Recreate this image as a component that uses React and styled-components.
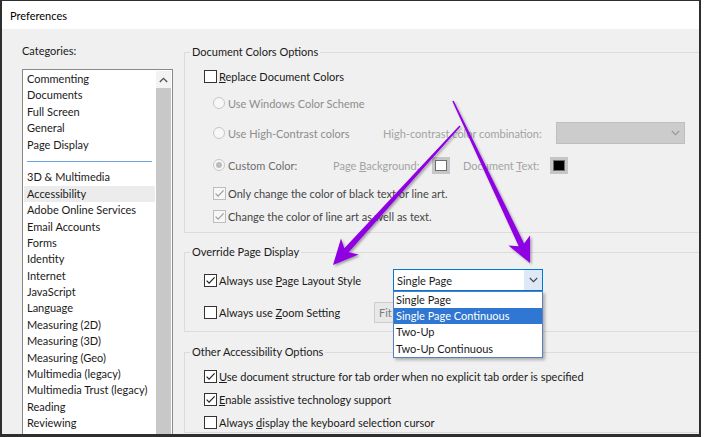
import React from "react";
import styled, { createGlobalStyle } from "styled-components";

const Global = createGlobalStyle`
  html, body { margin: 0; padding: 0; background: #fff; }
  body { font-family: Lato, "Open Sans", sans-serif; font-size: 11px; color: #1a1a1a; }
  * { box-sizing: border-box; }
`;

const tones = {
  normal: "#1a1a1a",
  sub: "#454545",
  muted: "#6d6d6d",
  disabled: "#8d8d8d",
  faint: "#a3a3a3",
};

const Root = styled.div`
  position: relative;
  width: 705px;
  height: 437px;
  overflow: hidden;
  background: #fff;
`;

const Frame = styled.div`
  width: 701px;
  height: 437px;
  border-style: solid;
  border-color: #2e2e2e;
  border-width: 1px 2px 3px 2px;
  display: flex;
  flex-direction: column;
  background: #f0f0f0;
  overflow: hidden;
`;

const TitleBar = styled.div`
  height: 28px;
  flex: none;
  background: #fff;
  display: flex;
  align-items: center;
  padding-left: 8px;
  color: #000;
`;

const Body = styled.div`
  flex: 1;
  min-height: 0;
  display: grid;
  grid-template-columns: 151px 1fr;
  column-gap: 11px;
  padding: 15px 0 0 20px;
  overflow: hidden;
`;

const LeftCol = styled.div`
  display: flex;
  flex-direction: column;
  min-height: 0;
`;

const Caption = styled.div`
  height: 16px;
  line-height: 16px;
  margin-top: -1px;
`;

const ListBox = styled.div`
  margin-top: 10px;
  flex: 1;
  min-height: 0;
  background: #fff;
  border: 1px solid #8a8a8a;
  border-bottom: none;
  padding: 1px 1px 0 1px;
  display: flex;
`;

const Items = styled.div`
  flex: 1;
  display: flex;
  flex-direction: column;
  min-width: 0;
`;

const Item = styled.div`
  flex: none;
  height: 16.4px;
  line-height: 16.4px;
  padding-left: 3px;
  margin-right: 1px;
  white-space: nowrap;
  background: ${(p) => (p.$selected ? "#ececec" : "transparent")};
`;

const Separator = styled.div`
  flex: none;
  height: 16.4px;
  display: flex;
  align-items: center;
  padding: 0 4px 0 3px;
  &::after {
    content: "";
    flex: 1;
    height: 1px;
    background: #6aa5e2;
  }
`;

const ScrollBar = styled.div`
  width: 15px;
  flex: none;
  display: flex;
  flex-direction: column;
`;

const ScrollBtn = styled.div`
  height: 17px;
  flex: none;
  background: #f3f3f3;
  display: flex;
  align-items: center;
  justify-content: center;
  color: #505050;
`;

const Thumb = styled.div`
  flex: 1;
  background: #c8c8c8;
`;

const RightCol = styled.div`
  display: flex;
  flex-direction: column;
  align-items: flex-start;
  min-width: 0;
  overflow: hidden;
`;

const Group = styled.fieldset`
  width: calc(100% + 12px);
  flex: none;
  margin: ${(p) => p.$mt || 0}px 0 0 0;
  padding: 0 0 ${(p) => p.$pb || 0}px 0;
  border: 1px solid #dcdcdc;
  min-width: 0;
`;

const Legend = styled.legend`
  margin-left: 5px;
  padding: 0 2px;
  line-height: 16px;
  color: #1a1a1a;
`;

const Row = styled.div`
  display: flex;
  align-items: center;
  height: ${(p) => p.$h || 20}px;
  margin-top: ${(p) => p.$mt || 0}px;
  padding-left: ${(p) => p.$indent || 19}px;
  white-space: nowrap;
`;

const Option = styled.label`
  display: flex;
  align-items: center;
  flex: none;
  ${(p) => (p.$w ? `width: ${p.$w}px;` : "")}
`;

const Text = styled.span`
  color: ${(p) => tones[p.$tone || "normal"]};
  flex: none;
  ${(p) => (p.$w ? `width: ${p.$w}px;` : "")}
  ${(p) => (p.$ml ? `margin-left: ${p.$ml}px;` : "")}
`;

const Key = styled.u`
  text-decoration: underline;
  text-underline-offset: 1px;
`;

const Box = styled.span`
  width: 13px;
  height: 13px;
  flex: none;
  margin-right: 2px;
  border: 1px solid ${(p) => (p.$disabled ? "#bdbdbd" : "#333")};
  background: ${(p) => (p.$disabled ? "#f7f7f7" : "#fff")};
  color: ${(p) => (p.$disabled ? "#9c9c9c" : "#222")};
  display: flex;
  align-items: center;
  justify-content: center;
`;

const RadioCircle = styled.span`
  width: 12px;
  height: 12px;
  flex: none;
  margin-right: 3px;
  border-radius: 50%;
  border: 1px solid #c6c6c6;
  background: #f7f7f7;
  display: flex;
  align-items: center;
  justify-content: center;
  &::after {
    content: "";
    width: 6px;
    height: 6px;
    border-radius: 50%;
    background: ${(p) => (p.$on ? "#bcbcbc" : "transparent")};
  }
`;

const DisabledCombo = styled.div`
  width: 129px;
  height: 22px;
  flex: none;
  background: #cccccc;
  border: 1px solid #bfbfbf;
  display: flex;
  align-items: center;
  justify-content: flex-end;
  padding-right: 4px;
  color: #9a9a9a;
`;

const Swatch = styled.span`
  width: 18px;
  height: 17px;
  flex: none;
  padding: 3px;
  background: #c6c6c6;
  display: flex;
  &::after {
    content: "";
    flex: 1;
    background: ${(p) => p.$color};
    border: 1px solid #6d6d6d;
  }
`;

const Select = styled.div`
  position: relative;
  width: 150px;
  height: 22px;
  flex: none;
  background: #fff;
  border: 1px solid #0078d7;
  display: flex;
  align-items: center;
`;

const SelectText = styled.span`
  flex: 1;
  padding-left: 3px;
`;

const SelectBtn = styled.span`
  width: 18px;
  align-self: stretch;
  background: #dde9f6;
  display: flex;
  align-items: center;
  justify-content: center;
  color: #444;
`;

const Popup = styled.div`
  position: absolute;
  left: -1px;
  top: calc(100% + 1px);
  width: 150px;
  background: #fff;
  border: 1px solid #5a7ec2;
  box-shadow: 2px 2px 3px rgba(0, 0, 0, 0.28);
  z-index: 3;
`;

const PopupItem = styled.div`
  height: 16.2px;
  line-height: 16.2px;
  padding-left: 2px;
  white-space: nowrap;
  background: ${(p) => (p.$active ? "#2f77d2" : "transparent")};
  color: ${(p) => (p.$active ? "#fff" : "#1a1a1a")};
`;

const FitBox = styled.div`
  width: 150px;
  height: 21px;
  flex: none;
  background: #e8e8e8;
  border: 1px solid #cdcdcd;
  display: flex;
  align-items: center;
  padding-left: 4px;
  color: #7d7d7d;
`;

const Overlay = styled.svg`
  position: absolute;
  left: 0;
  top: 0;
  width: 705px;
  height: 437px;
  pointer-events: none;
  z-index: 10;
`;

const Check = () => (
  <svg width="11" height="11" viewBox="0 0 11 11">
    <polyline points="1.6,5.6 4.1,8.1 9.6,2.4" fill="none" stroke="currentColor" strokeWidth="1.2" />
  </svg>
);

const CheckBox = ({ checked, disabled }) => (
  <Box $disabled={disabled}>{checked && <Check />}</Box>
);

const ChevronDown = ({ color = "currentColor" }) => (
  <svg width="9" height="6" viewBox="0 0 9 6">
    <polyline points="0.8,1 4.5,4.7 8.2,1" fill="none" stroke={color} strokeWidth="1.1" />
  </svg>
);

const ChevronUp = () => (
  <svg width="9" height="6" viewBox="0 0 9 6">
    <polyline points="0.8,5 4.5,1.3 8.2,5" fill="none" stroke="currentColor" strokeWidth="1.3" />
  </svg>
);

function arrowPoints(sx, sy, tx, ty) {
  const w0 = 1.6, w1 = 6, headLen = 25, headHalf = 12, notch = 5;
  const len = Math.hypot(tx - sx, ty - sy);
  const dx = (tx - sx) / len, dy = (ty - sy) / len;
  const nx = -dy, ny = dx;
  const bx = tx - dx * headLen, by = ty - dy * headLen;
  const kx = tx - dx * (headLen - notch), ky = ty - dy * (headLen - notch);
  const pts = [
    [sx + nx * w0 / 2, sy + ny * w0 / 2],
    [kx + nx * w1 / 2, ky + ny * w1 / 2],
    [bx + nx * headHalf, by + ny * headHalf],
    [tx, ty],
    [bx - nx * headHalf, by - ny * headHalf],
    [kx - nx * w1 / 2, ky - ny * w1 / 2],
    [sx - nx * w0 / 2, sy - ny * w0 / 2],
  ];
  return pts.map((p) => p.map((v) => v.toFixed(1)).join(",")).join(" ");
}

const categoriesTop = ["Commenting", "Documents", "Full Screen", "General", "Page Display"];
const categoriesBottom = [
  "3D & Multimedia",
  "Accessibility",
  "Adobe Online Services",
  "Email Accounts",
  "Forms",
  "Identity",
  "Internet",
  "JavaScript",
  "Language",
  "Measuring (2D)",
  "Measuring (3D)",
  "Measuring (Geo)",
  "Multimedia (legacy)",
  "Multimedia Trust (legacy)",
  "Reading",
  "Reviewing",
];

const layoutOptions = ["Single Page", "Single Page Continuous", "Two-Up", "Two-Up Continuous"];

export default function App() {
  return (
    <Root>
      <Global />
      <Frame>
        <TitleBar>Preferences</TitleBar>
        <Body>
          <LeftCol>
            <Caption>Categories:</Caption>
            <ListBox>
              <Items>
                {categoriesTop.map((c) => (
                  <Item key={c}>{c}</Item>
                ))}
                <Separator />
                {categoriesBottom.map((c) => (
                  <Item key={c} $selected={c === "Accessibility"}>
                    {c}
                  </Item>
                ))}
              </Items>
              <ScrollBar>
                <ScrollBtn>
                  <ChevronUp />
                </ScrollBtn>
                <Thumb />
              </ScrollBar>
            </ListBox>
          </LeftCol>

          <RightCol>
            <Group $pb={6}>
              <Legend>Document Colors Options</Legend>
              <Row $mt={6}>
                <Option>
                  <CheckBox />
                  <Text>
                    <Key>R</Key>eplace Document Colors
                  </Text>
                </Option>
              </Row>
              <Row $mt={7} $indent={28}>
                <Option>
                  <RadioCircle />
                  <Text $tone="disabled">Use Windows Color Scheme</Text>
                </Option>
              </Row>
              <Row $mt={9} $h={22} $indent={28}>
                <Option $w={170}>
                  <RadioCircle />
                  <Text $tone="disabled">Use High-Contrast colors</Text>
                </Option>
                <Text $tone="faint" $w={173}>
                  Hi<Key>g</Key>h-contrast color combination:
                </Text>
                <DisabledCombo>
                  <ChevronDown color="#9a9a9a" />
                </DisabledCombo>
              </Row>
              <Row $mt={11} $indent={28}>
                <Option $w={120}>
                  <RadioCircle $on />
                  <Text $tone="muted">Custom Color:</Text>
                </Option>
                <Text $tone="faint" $w={99}>
                  Page <Key>B</Key>ackground:
                </Text>
                <Swatch $color="#ffffff" />
                <Text $tone="faint" $w={87} $ml={13}>
                  Document <Key>T</Key>ext:
                </Text>
                <Swatch $color="#000000" />
              </Row>
              <Row $mt={8} $indent={28}>
                <Option>
                  <CheckBox checked disabled />
                  <Text $tone="sub">Only change the color of black text or line art.</Text>
                </Option>
              </Row>
              <Row $mt={3} $indent={28}>
                <Option>
                  <CheckBox checked disabled />
                  <Text $tone="sub">Change the color of line art as well as text.</Text>
                </Option>
              </Row>
            </Group>

            <Group $mt={11} $pb={8}>
              <Legend>Override Page Display</Legend>
              <Row $mt={9} $h={22}>
                <Option $w={189}>
                  <CheckBox checked />
                  <Text>
                    Always use <Key>P</Key>age Layout Style
                  </Text>
                </Option>
                <Select>
                  <SelectText>Single Page</SelectText>
                  <SelectBtn>
                    <ChevronDown />
                  </SelectBtn>
                  <Popup>
                    {layoutOptions.map((o) => (
                      <PopupItem key={o} $active={o === "Single Page Continuous"}>
                        {o}
                      </PopupItem>
                    ))}
                  </Popup>
                </Select>
              </Row>
              <Row $mt={11} $h={21}>
                <Option $w={170}>
                  <CheckBox />
                  <Text>
                    Always use <Key>Z</Key>oom Setting
                  </Text>
                </Option>
                <FitBox>Fit</FitBox>
              </Row>
            </Group>

            <Group $mt={12}>
              <Legend>Other Accessibility Options</Legend>
              <Row $mt={6}>
                <Option>
                  <CheckBox checked />
                  <Text>
                    <Key>U</Key>se document structure for tab order when no explicit tab order is specified
                  </Text>
                </Option>
              </Row>
              <Row $mt={3}>
                <Option>
                  <CheckBox checked />
                  <Text>
                    <Key>E</Key>nable assistive technology support
                  </Text>
                </Option>
              </Row>
              <Row $mt={3}>
                <Option>
                  <CheckBox />
                  <Text>
                    Always <Key>d</Key>isplay the keyboard selection cursor
                  </Text>
                </Option>
              </Row>
            </Group>
          </RightCol>
        </Body>
      </Frame>

      <Overlay viewBox="0 0 705 437">
        <defs>
          <filter id="arrowShadow" x="-20%" y="-20%" width="140%" height="140%">
            <feDropShadow dx="1.5" dy="1.5" stdDeviation="1.2" floodColor="#000" floodOpacity="0.35" />
          </filter>
        </defs>
        <g fill="#8f00e3" filter="url(#arrowShadow)">
          <polygon points={arrowPoints(453, 101, 530, 263)} />
          <polygon points={arrowPoints(460, 126, 333, 265)} />
        </g>
      </Overlay>
    </Root>
  );
}
